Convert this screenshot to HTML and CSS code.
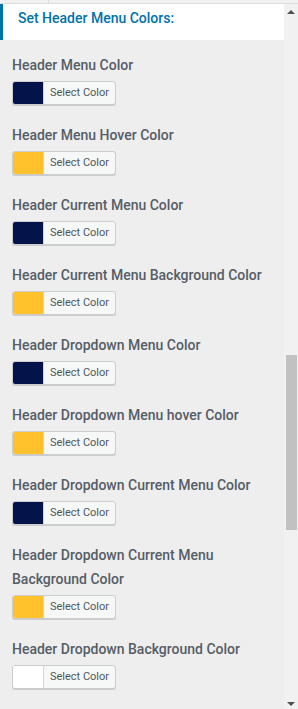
FILE: index.html
```html
<!DOCTYPE html>
<html>
<head>
<meta charset="utf-8">
<link rel="stylesheet" href="styles.css">
</head>
<body>
<div class="topbar"><div class="tab"></div></div>
<div class="page">
  <div class="panel">
    <div class="header">Set Header Menu Colors:</div>
    <div class="fields">
      <div class="field">
        <div class="label">Header Menu Color</div>
        <button class="picker"><span class="swatch navy"></span><span class="btn-text">Select Color</span></button>
      </div>
      <div class="field">
        <div class="label">Header Menu Hover Color</div>
        <button class="picker"><span class="swatch yellow"></span><span class="btn-text">Select Color</span></button>
      </div>
      <div class="field">
        <div class="label">Header Current Menu Color</div>
        <button class="picker"><span class="swatch navy"></span><span class="btn-text">Select Color</span></button>
      </div>
      <div class="field">
        <div class="label">Header Current Menu Background Color</div>
        <button class="picker"><span class="swatch yellow"></span><span class="btn-text">Select Color</span></button>
      </div>
      <div class="field">
        <div class="label">Header Dropdown Menu Color</div>
        <button class="picker"><span class="swatch navy"></span><span class="btn-text">Select Color</span></button>
      </div>
      <div class="field">
        <div class="label">Header Dropdown Menu hover Color</div>
        <button class="picker"><span class="swatch yellow"></span><span class="btn-text">Select Color</span></button>
      </div>
      <div class="field">
        <div class="label">Header Dropdown Current Menu Color</div>
        <button class="picker"><span class="swatch navy"></span><span class="btn-text">Select Color</span></button>
      </div>
      <div class="field">
        <div class="label">Header Dropdown Current Menu Background Color</div>
        <button class="picker"><span class="swatch yellow"></span><span class="btn-text">Select Color</span></button>
      </div>
      <div class="field">
        <div class="label">Header Dropdown Background Color</div>
        <button class="picker"><span class="swatch white"></span><span class="btn-text">Select Color</span></button>
      </div>
    </div>
  </div>
  <div class="scrollbar">
    <div class="arrow up"></div>
    <div class="track"><div class="thumb"></div></div>
    <div class="arrow down"></div>
  </div>
</div>
</body>
</html>
```
FILE: styles.css
```css
* { box-sizing: border-box; }
html, body { margin: 0; padding: 0; }
body {
  width: 298px;
  height: 709px;
  overflow: hidden;
  background: #eeeeee;
  font-family: Roboto, "Liberation Sans", sans-serif;
  display: flex;
  flex-direction: column;
}
.topbar {
  height: 4px;
  background: #f1f1f1;
  border-bottom: 1px solid #dddddd;
  flex: none;
}
.tab {
  width: 49px;
  height: 3px;
  border-right: 1px solid #dddddd;
}
.page {
  flex: 1;
  display: flex;
  min-height: 0;
}
.panel {
  flex: 1;
  background: #eeeeee;
  display: flex;
  flex-direction: column;
  overflow: hidden;
}
.header {
  flex: none;
  height: 36px;
  background: #ffffff;
  border-left: 3px solid #0073aa;
  padding: 4px 0 0 15px;
  font-size: 14px;
  line-height: 20px;
  font-weight: 500;
  color: #0073aa;
}
.fields {
  flex: none;
  padding: 13px 8px 0 12px;
  display: flex;
  flex-direction: column;
}
.field {
  display: flex;
  flex-direction: column;
  align-items: flex-start;
  margin-bottom: 18px;
}
.label {
  font-size: 14px;
  line-height: 24px;
  font-weight: 500;
  color: #555d66;
}
.picker {
  margin: 4px 0 0 0;
  padding: 0;
  display: flex;
  height: 24px;
  width: 104px;
  border: 1px solid #cccccc;
  border-radius: 3px;
  background: #f6f7f7;
  box-shadow: 0 1px 0 #cccccc;
  overflow: hidden;
  font-family: inherit;
  cursor: pointer;
}
.swatch {
  width: 30px;
  height: 100%;
  flex: none;
}
.navy { background: #041349; }
.yellow { background: #ffc12c; }
.white { background: #ffffff; }
.btn-text {
  flex: 1;
  border-left: 1px solid #d5d5d5;
  font-size: 11px;
  line-height: 22px;
  color: #50575e;
  text-align: center;
}
.scrollbar {
  width: 14px;
  flex: none;
  background: #f1f1f1;
  display: flex;
  flex-direction: column;
  align-items: center;
}
.arrow {
  width: 0;
  height: 0;
  border-left: 4px solid transparent;
  border-right: 4px solid transparent;
  flex: none;
}
.arrow.up {
  margin-top: 6px;
  border-bottom: 4px solid #505050;
}
.arrow.down {
  margin-bottom: 3px;
  border-top: 4px solid #505050;
}
.track {
  flex: 1;
  width: 100%;
  display: flex;
  flex-direction: column;
  padding: 341px 1px 0 2px;
}
.thumb {
  height: 175px;
  background: #c1c1c1;
}
```
